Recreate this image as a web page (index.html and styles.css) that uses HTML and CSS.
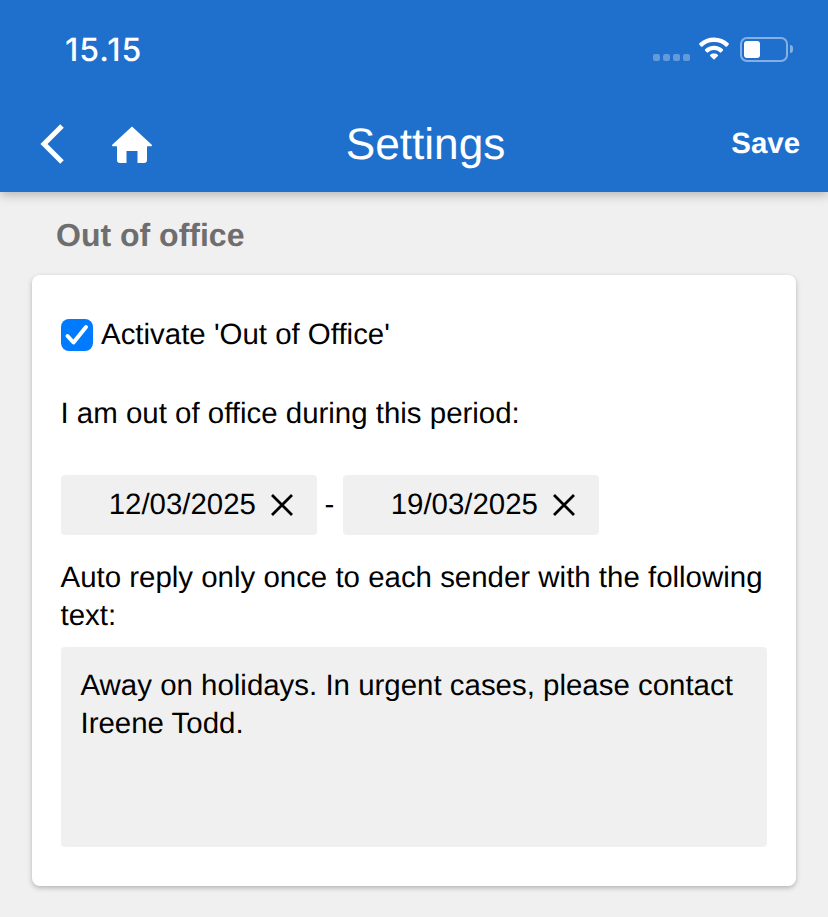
FILE: index.html
```html
<!DOCTYPE html>
<html lang="en">
<head>
<meta charset="utf-8">
<title>Settings</title>
<link rel="stylesheet" href="styles.css">
</head>
<body>
<header class="header">
  <div class="status">
    <span class="time">15.15</span>
    <div class="status-icons">
      <span class="signal"><i></i><i></i><i></i><i></i></span>
      <svg class="wifi" width="34" height="25" viewBox="0 0 32 24"><path d="M16 2.5c5.400 0 10.300 2.100 14 5.500a1 1 0 0 1 0 1.400l-1.500 1.600a1 1 0 0 1-1.400 0A16 16 0 0 0 16 6.800 16 16 0 0 0 4.900 11a1 1 0 0 1-1.400 0L2 9.400A1 1 0 0 1 2 8a20.600 20.600 0 0 1 14-5.500z" fill="#fff"/><path d="M16 10.300c3.300 0 6.300 1.300 8.500 3.300a1 1 0 0 1 0 1.400L23 16.600a1 1 0 0 1-1.400 0A8.400 8.400 0 0 0 16 14.500a8.400 8.400 0 0 0-5.600 2.100 1 1 0 0 1-1.400 0L7.500 15a1 1 0 0 1 0-1.400c2.200-2 5.200-3.300 8.500-3.300z" fill="#fff"/><path d="M16 17.800c1.500 0 2.800.5 3.700 1.300.3.300.3.700 0 1L16.500 23.300a.7.700 0 0 1-1 0l-3.200-3.200a.7.700 0 0 1 0-1c.9-.8 2.200-1.300 3.700-1.300z" fill="#fff"/></svg>
      <span class="battery"><span class="battery-level"></span></span>
      <span class="battery-cap"></span>
    </div>
  </div>
  <nav class="nav">
    <div class="nav-left">
      <svg class="back" width="26" height="40" viewBox="0 0 26 40"><path d="M23 2 5 20l18 18" fill="none" stroke="#fff" stroke-width="5"/></svg>
      <svg class="home" width="40" height="37" viewBox="0 0 40 37"><path d="M20 0.500 39.500 18.500a1 1 0 0 1-.7 1.800H35V34a3 3 0 0 1-3 3h-6.500V25h-11v12H8a3 3 0 0 1-3-3V20.300H1.200A1 1 0 0 1 .5 18.500z" fill="#fff"/></svg>
    </div>
    <h1 class="title">Settings</h1>
    <span class="save">Save</span>
  </nav>
</header>
<main class="main">
  <h2 class="section-title">Out of office</h2>
  <section class="card">
    <label class="check-row">
      <span class="checkbox"><svg width="32" height="32" viewBox="0 0 32 32"><path d="M6.500 17l6 6.500L25 8" fill="none" stroke="#fff" stroke-width="4" stroke-linecap="round" stroke-linejoin="round"/></svg></span>
      <span>Activate 'Out of Office'</span>
    </label>
    <p class="period">I am out of office during this period:</p>
    <div class="dates">
      <div class="date"><span>12/03/2025</span><svg width="24" height="24" viewBox="0 0 24 24"><path d="M2 2l20 20M22 2 2 22" stroke="#000" stroke-width="2.800" fill="none"/></svg></div>
      <span class="dash">-</span>
      <div class="date"><span>19/03/2025</span><svg width="24" height="24" viewBox="0 0 24 24"><path d="M2 2l20 20M22 2 2 22" stroke="#000" stroke-width="2.800" fill="none"/></svg></div>
    </div>
    <p class="auto">Auto reply only once to each sender with the following text:</p>
    <div class="textarea">Away on holidays. In urgent cases, please contact Ireene Todd.</div>
  </section>
</main>
</body>
</html>
```
FILE: styles.css
```css
* { box-sizing: border-box; }
html, body { margin: 0; height: 100%; }
body {
  background: #f0f0f0;
  font-family: "Liberation Sans", Arial, sans-serif;
  color: #000;
  overflow: hidden;
  text-rendering: geometricPrecision;
  -webkit-font-smoothing: antialiased;
}
.header {
  height: 192px;
  background: #1f6fcc;
  color: #fff;
  box-shadow: 0 3px 10px rgba(0,0,0,.25);
}
.status {
  height: 98px;
  display: flex;
  justify-content: space-between;
  align-items: flex-start;
  padding: 31px 35px 0 65px;
}
.time {
  font-family: Inter, "Noto Sans", sans-serif;
  font-size: 32px;
  font-weight: 500;
  line-height: 38px;
  letter-spacing: 1px;
}
.status-icons { display: flex; align-items: center; height: 36px; }
.signal { display: flex; gap: 3px; margin: 16px 7px 0 0; }
.signal i { width: 7px; height: 7px; border-radius: 2px; background: rgba(255,255,255,.3); }
.wifi { margin: -3px 9px 0 0; }
.battery {
  width: 48px;
  height: 25px;
  border: 2px solid rgba(255,255,255,.45);
  border-radius: 7px;
  padding: 2px;
  display: block;
}
.battery-level { display: block; width: 16px; height: 17px; background: #fff; border-radius: 3px; }
.battery-cap {
  width: 3px;
  height: 8px;
  margin-left: 2px;
  background: rgba(255,255,255,.45);
  border-radius: 0 3px 3px 0;
}
.nav {
  height: 94px;
  display: grid;
  grid-template-columns: 1fr auto 1fr;
  align-items: center;
  padding: 0 28px 2px 39px;
}
.nav-left { display: flex; align-items: center; gap: 47px; }
.title { margin: 2px 0 0; font-size: 44.2px; font-weight: 400; line-height: 48px; position: relative; left: 6px; }
.save { justify-self: end; font-size: 29.44px; font-weight: 700; }
.main { padding: 24px 32px 0; }
.section-title {
  margin: 0 0 21px 24px;
  font-size: 32px;
  line-height: 38px;
  font-weight: 700;
  color: #6e6e6e;
}
.card {
  background: #fff;
  border-radius: 8px;
  box-shadow: 0 2px 5px rgba(0,0,0,.25);
  height: 611px;
  padding: 40px 29px 0;
  font-size: 29.44px;
  line-height: 38px;
}
.check-row { display: flex; align-items: center; gap: 8px; height: 38px; margin-top: 1px; }
.checkbox {
  width: 32px;
  height: 32px;
  border-radius: 8px;
  background: #007aff;
  display: block;
}
.checkbox svg { display: block; }
.period { margin: 41px 0 0 -0.5px; }
.dates { display: flex; align-items: center; margin-top: 42px; }
.date {
  width: 256px;
  height: 60px;
  background: #f0f0f0;
  border-radius: 4px;
  display: flex;
  align-items: center;
  justify-content: flex-end;
  gap: 14px;
  padding-right: 23px;
}
.date svg { display: block; }
.dash { width: 25px; margin-right: 1px; text-align: center; }
.auto { margin: 24px 0 0 -0.5px; }
.textarea {
  margin-top: 12px;
  height: 200px;
  background: #f0f0f0;
  border-radius: 4px;
  padding: 20px 19.500px;
}
```
